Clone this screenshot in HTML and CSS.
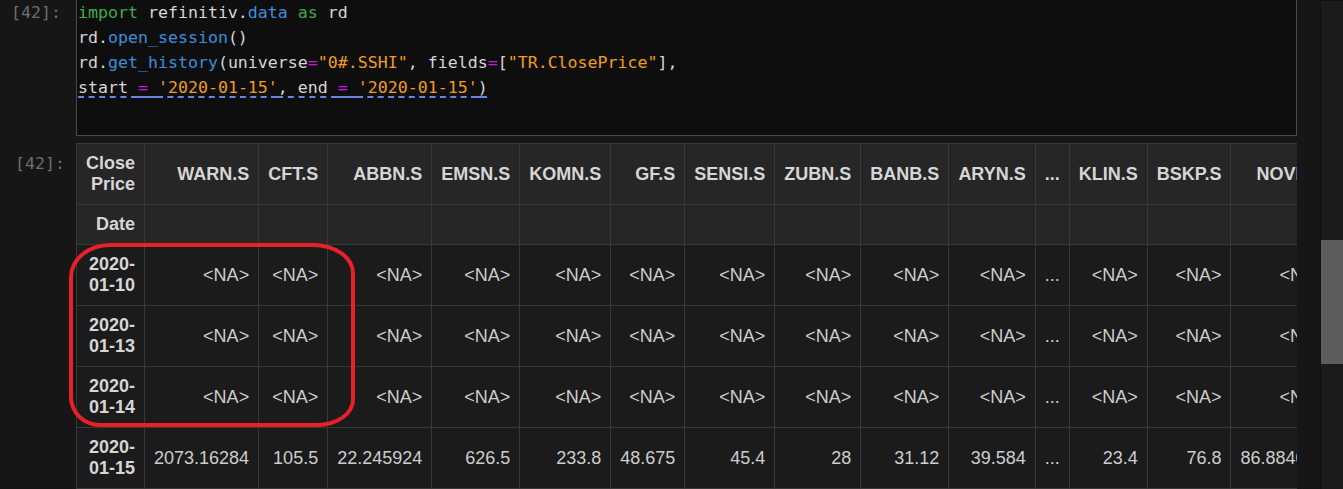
FILE: index.html
```html
<!DOCTYPE html>
<html>
<head>
<meta charset="utf-8">
<link rel="stylesheet" href="styles.css">
</head>
<body>
<div class="main">
  <div class="cell">
    <div class="prompt">[42]:</div>
    <div class="code">
      <div class="line"><span class="kw">import</span> refinitiv.<span class="fn">data</span> <span class="kw">as</span> rd</div>
      <div class="line">rd.<span class="fn">open_session</span>()</div>
      <div class="line">rd.<span class="fn">get_history</span>(universe<span class="op">=</span><span class="str">"0#.SSHI"</span>, fields<span class="op">=</span>[<span class="str">"TR.ClosePrice"</span>],</div>
      <div class="line"><span class="lint">start <span class="op">=</span> <span class="str">'2020-01-15'</span>, end <span class="op">=</span> <span class="str">'2020-01-15'</span>)</span></div>
    </div>
  </div>
  <div class="cell out">
    <div class="prompt">[42]:</div>
    <div class="output">
      <table class="df">
        <thead>
          <tr><th>Close Price</th><th>WARN.S</th><th>CFT.S</th><th>ABBN.S</th><th>EMSN.S</th><th>KOMN.S</th><th>GF.S</th><th>SENSI.S</th><th>ZUBN.S</th><th>BANB.S</th><th>ARYN.S</th><th>...</th><th>KLIN.S</th><th>BSKP.S</th><th>NOVN.S</th><th>ROG.S</th><th>SIKA.S</th><th>SREN.S</th><th>UBSG.S</th><th>ZURN.S</th><th>LONN.S</th><th>GIVN.S</th></tr>
          <tr><th>Date</th><th></th><th></th><th></th><th></th><th></th><th></th><th></th><th></th><th></th><th></th><th></th><th></th><th></th><th></th><th></th><th></th><th></th><th></th><th></th><th></th><th></th></tr>
        </thead>
        <tbody>
          <tr><th>2020-01-10</th><td>&lt;NA&gt;</td><td>&lt;NA&gt;</td><td>&lt;NA&gt;</td><td>&lt;NA&gt;</td><td>&lt;NA&gt;</td><td>&lt;NA&gt;</td><td>&lt;NA&gt;</td><td>&lt;NA&gt;</td><td>&lt;NA&gt;</td><td>&lt;NA&gt;</td><td>...</td><td>&lt;NA&gt;</td><td>&lt;NA&gt;</td><td>&lt;NA&gt;</td><td>&lt;NA&gt;</td><td>&lt;NA&gt;</td><td>&lt;NA&gt;</td><td>&lt;NA&gt;</td><td>&lt;NA&gt;</td><td>&lt;NA&gt;</td><td>&lt;NA&gt;</td></tr>
          <tr><th>2020-01-13</th><td>&lt;NA&gt;</td><td>&lt;NA&gt;</td><td>&lt;NA&gt;</td><td>&lt;NA&gt;</td><td>&lt;NA&gt;</td><td>&lt;NA&gt;</td><td>&lt;NA&gt;</td><td>&lt;NA&gt;</td><td>&lt;NA&gt;</td><td>&lt;NA&gt;</td><td>...</td><td>&lt;NA&gt;</td><td>&lt;NA&gt;</td><td>&lt;NA&gt;</td><td>&lt;NA&gt;</td><td>&lt;NA&gt;</td><td>&lt;NA&gt;</td><td>&lt;NA&gt;</td><td>&lt;NA&gt;</td><td>&lt;NA&gt;</td><td>&lt;NA&gt;</td></tr>
          <tr><th>2020-01-14</th><td>&lt;NA&gt;</td><td>&lt;NA&gt;</td><td>&lt;NA&gt;</td><td>&lt;NA&gt;</td><td>&lt;NA&gt;</td><td>&lt;NA&gt;</td><td>&lt;NA&gt;</td><td>&lt;NA&gt;</td><td>&lt;NA&gt;</td><td>&lt;NA&gt;</td><td>...</td><td>&lt;NA&gt;</td><td>&lt;NA&gt;</td><td>&lt;NA&gt;</td><td>&lt;NA&gt;</td><td>&lt;NA&gt;</td><td>&lt;NA&gt;</td><td>&lt;NA&gt;</td><td>&lt;NA&gt;</td><td>&lt;NA&gt;</td><td>&lt;NA&gt;</td></tr>
          <tr><th>2020-01-15</th><td>2073.16284</td><td>105.5</td><td>22.245924</td><td>626.5</td><td>233.8</td><td>48.675</td><td>45.4</td><td>28</td><td>31.12</td><td>39.584</td><td>...</td><td>23.4</td><td>76.8</td><td>86.884046</td><td>268.05</td><td>218.7</td><td>110.95</td><td>11.632</td><td>419.6</td><td>524.6</td><td>4284.0</td></tr>
        </tbody>
      </table>
    </div>
  </div>
  <div class="annotation"></div>
</div>
<div class="scrollbar"><div class="thumb"></div></div>
</body>
</html>
```
FILE: styles.css
```css
html, body {
  margin: 0;
  padding: 0;
}
body {
  display: flex;
  width: 1343px;
  height: 489px;
  overflow: hidden;
  background: #161616;
}
.main {
  position: relative;
  flex: 1;
  padding-right: 23px;
  min-width: 0;
}
.cell {
  display: flex;
}
.prompt {
  width: 76px;
  flex: none;
  box-sizing: border-box;
  padding-right: 15px;
  text-align: right;
  font-family: "DejaVu Sans Mono", monospace;
  font-size: 16.6px;
  line-height: 25px;
  color: #6e6e6e;
}
.code {
  flex: 1;
  min-width: 0;
  height: 135px;
  box-sizing: content-box;
  background: #0e0e0e;
  border: 1px solid #4a4a4a;
  border-top: none;
  padding-left: 1px;
  font-family: "DejaVu Sans Mono", monospace;
  font-size: 16.6px;
  line-height: 25px;
  color: #d6d6d6;
}
.line {
  white-space: pre;
}
.kw { color: #3fab47; }
.fn { color: #3a8fdc; }
.str { color: #f29d1e; }
.op { color: #cc17e0; }
.lint {
  text-decoration: underline dashed #6c84e6;
  text-decoration-thickness: 2px;
  text-underline-offset: 3px;
}
.out {
  margin-top: 7px;
}
.out .prompt {
  padding-top: 8px;
  padding-right: 11px;
}
.output {
  flex: 1;
  min-width: 0;
  overflow: hidden;
}
.df {
  border-collapse: collapse;
  font-family: "Liberation Sans", Arial, sans-serif;
  font-size: 18px;
  line-height: 21px;
  color: #cdcdcd;
}
.df th, .df td {
  border: 1px solid #383838;
  padding: 9px;
  text-align: right;
  vertical-align: middle;
}
.df th {
  font-weight: bold;
  color: #d6d6d6;
}
.df td {
  white-space: nowrap;
}
.df thead th {
  background: #262626;
}
.df tbody th, .df tbody td {
  background: #1b1b1b;
}
.annotation {
  position: absolute;
  left: 69px;
  top: 243px;
  width: 286px;
  height: 184px;
  box-sizing: border-box;
  border: 4px solid #e8202a;
  border-radius: 41px 42px 38px 31px / 34px 30px 27px 30px;
  pointer-events: none;
}
.scrollbar {
  flex: none;
  width: 22px;
  background: #1b1b1b;
  border-left: 1px solid #101010;
  border-top: 1px solid #101010;
}
.thumb {
  margin-top: 239px;
  height: 124px;
  background: #5c5c5c;
}
```
